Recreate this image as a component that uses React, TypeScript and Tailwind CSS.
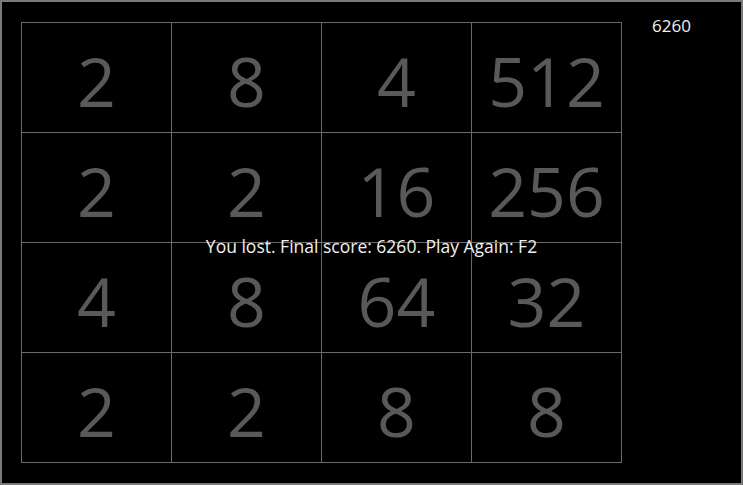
import React from 'react';

const board: number[][] = [
  [2, 8, 4, 512],
  [2, 2, 16, 256],
  [4, 8, 64, 32],
  [2, 2, 8, 8],
];

const score = 6260;

export default function App() {
  return (
    <div
      className="relative w-[743px] h-[485px] bg-black border-2 border-[#7a7a7a] overflow-hidden"
      style={{ fontFamily: '"Open Sans", "DejaVu Sans", sans-serif' }}
    >
      {/* title bar highlights */}
      <div className="absolute -top-[2px] left-[143px] w-[175px] h-px bg-gradient-to-r from-[#9a9a9a] via-[#d8d8d8] to-[#a0a0a0]" />
      <div className="absolute -top-[2px] left-[364px] w-[171px] h-px bg-gradient-to-r from-[#a0a0a0] via-[#d8d8d8] to-[#9a9a9a]" />

      <div className="flex pl-[19px] pt-[20px]">
        {/* Board */}
        <div className="grid grid-cols-[repeat(4,150px)] grid-rows-[repeat(4,110px)] border-l border-t border-[#6b6b6b]">
          {board.flat().map((v, i) => (
            <div
              key={i}
              className="flex items-center justify-center border-r border-b border-[#6b6b6b] pt-[6px] text-[68px] leading-none text-[#595959]"
            >
              {v}
            </div>
          ))}
        </div>

        {/* Score */}
        <div className="ml-[30px] -mt-[9px] text-[17px] text-[#f0f0f0]">{score}</div>
      </div>

      {/* Game over message */}
      <div className="absolute inset-0 flex items-center justify-center pt-[8px] text-[17.5px] text-[#f0f0f0]">
        You lost. Final score: {score}. Play Again: F2
      </div>
    </div>
  );
}
